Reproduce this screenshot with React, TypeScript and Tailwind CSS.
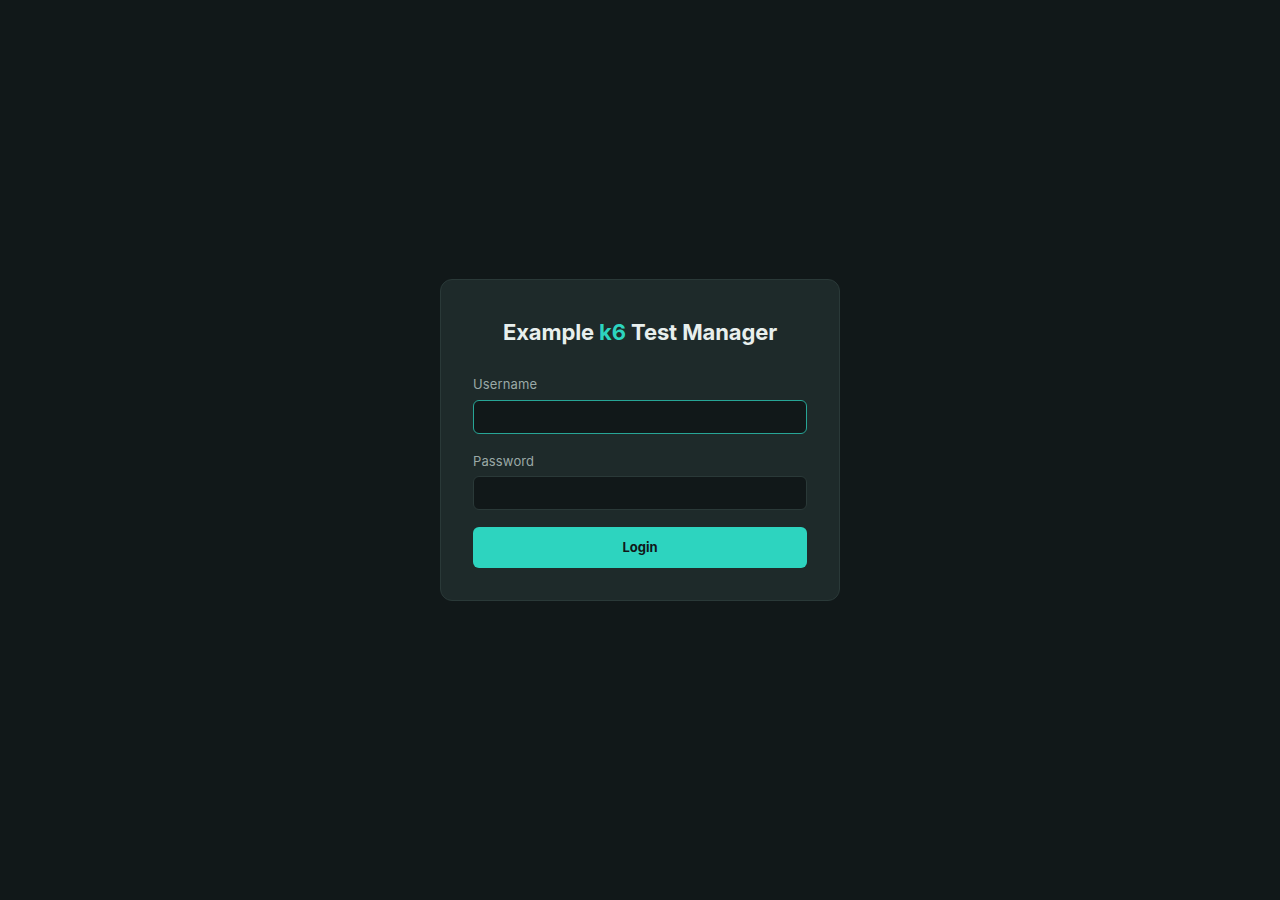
import React from "react";

export default function App() {
  return (
    <div
      className="min-h-screen w-full bg-[#111819] flex items-center justify-center pb-[20px]"
      style={{ fontFamily: "Inter, 'Noto Sans', sans-serif" }}
    >
      <div className="w-[400px] rounded-xl border border-[#2a3938] bg-[#1e2a2a] px-8 pt-8 pb-8">
        <h1 className="h-[40px] leading-[40px] text-center text-[22px] font-bold tracking-[-0.005em] text-[#e8efed]">
          Example <span className="text-[#2dd4bf]">k6</span> Test Manager
        </h1>
        <div className="mt-[22px]">
          <label className="block h-[20px] text-[13px] leading-[20px] tracking-[0.01em] text-[#9aa9a6]">Username</label>
          <input
            type="text"
            className="mt-[6px] block h-[34px] w-full rounded-md border border-[#27a596] bg-[#111819] px-3 text-sm text-[#e8efed] outline-none"
          />
        </div>
        <div className="mt-[17px]">
          <label className="block h-[20px] text-[13px] leading-[20px] tracking-[0.01em] text-[#9aa9a6]">Password</label>
          <input
            type="password"
            className="mt-[5px] block h-[34px] w-full rounded-md border border-[#2a3938] bg-[#111819] px-3 text-sm text-[#e8efed] outline-none"
          />
        </div>
        <button className="mt-[17px] block h-[41px] w-full rounded-md bg-[#2dd4bf] text-[13px] font-bold text-[#111819]">
          Login
        </button>
      </div>
    </div>
  );
}
